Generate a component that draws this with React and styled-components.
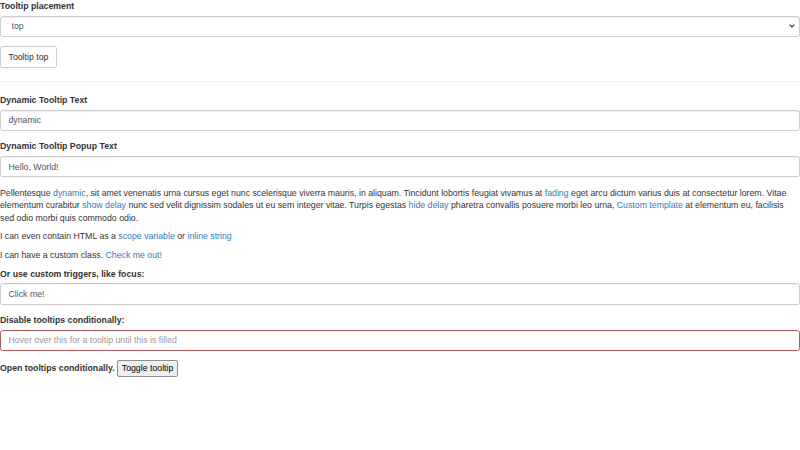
import React from "react";
import styled, { createGlobalStyle } from "styled-components";

const Global = createGlobalStyle`
  * { box-sizing: border-box; }
  html, body { margin: 0; padding: 0; background: #fff; }
  body {
    font-family: "Liberation Sans", Arial, Helvetica, sans-serif;
    font-size: 8.75px;
    line-height: 1.428571;
    color: #333;
  }
`;

const Page = styled.div`
  width: 800px;
`;

const FormGroup = styled.div`
  margin-bottom: 9.375px;
`;

const Label = styled.label`
  display: inline-block;
  max-width: 100%;
  margin-bottom: 3.125px;
  font-weight: bold;
`;

const fieldCss = `
  display: block;
  width: 100%;
  height: 21.25px;
  padding: 3.75px 7.5px;
  font-family: inherit;
  font-size: 8.75px;
  line-height: 1.428571;
  color: #555;
  background-color: #fff;
  border-radius: 2.5px;
  box-shadow: inset 0 0.625px 0.625px rgba(0, 0, 0, 0.075);
  outline: none;
  &::placeholder { color: #999; }
`;

const Input = styled.input`
  ${fieldCss}
  border: 1px solid ${(p) => (p.$error ? "#b25c5c" : "#ccc")};
`;

const chevron = encodeURIComponent(
  '<svg xmlns="http://www.w3.org/2000/svg" width="6" height="4" viewBox="0 0 6 4"><path d="M0.6 0.6 L3 3 L5.4 0.6" fill="none" stroke="#333" stroke-width="1.1"/></svg>'
);

const Select = styled.select`
  ${fieldCss}
  appearance: none;
  -webkit-appearance: none;
  padding: 0 16px 0 10.5px;
  border: 1px solid #ccc;
  background-image: url("data:image/svg+xml,${chevron}");
  background-repeat: no-repeat;
  background-position: right 4px center;
  background-size: 6px 4px;
`;

const Btn = styled.button`
  display: inline-block;
  padding: 3.75px 7.5px;
  font-family: inherit;
  font-size: 8.75px;
  line-height: 1.428571;
  color: #333;
  background: #fff;
  border: 1px solid #ccc;
  border-radius: 2.5px;
  cursor: pointer;
`;

const Rule = styled.hr`
  margin: 12.5px 0;
  border: 0;
  border-top: 1px solid #eee;
`;

const Para = styled.p`
  margin: 0 0 6.25px;
`;

const Link = styled.a`
  color: #337ab7;
  text-decoration: none;
  cursor: pointer;
`;

const PlainButton = styled.button`
  font-family: inherit;
  font-size: 8.75px;
  line-height: 1.428571;
  color: #000;
  background: #efefef;
  border: 1px solid #8f8f8f;
  border-radius: 2px;
  padding: 1px 3.75px;
`;

export default function App() {
  return (
    <Page>
      <Global />
      <FormGroup>
        <Label>Tooltip placement</Label>
        <Select defaultValue="top">
          <option value="top">top</option>
          <option value="bottom">bottom</option>
          <option value="left">left</option>
          <option value="right">right</option>
        </Select>
      </FormGroup>
      <Btn type="button">Tooltip top</Btn>
      <Rule />
      <FormGroup>
        <Label>Dynamic Tooltip Text</Label>
        <Input type="text" defaultValue="dynamic" />
      </FormGroup>
      <FormGroup>
        <Label>Dynamic Tooltip Popup Text</Label>
        <Input type="text" defaultValue="Hello, World!" />
      </FormGroup>
      <Para>
        Pellentesque <Link>dynamic</Link>, sit amet venenatis urna cursus eget
        nunc scelerisque viverra mauris, in aliquam. Tincidunt lobortis feugiat
        vivamus at <Link>fading</Link> eget arcu dictum varius duis at
        consectetur lorem. Vitae elementum curabitur <Link>show delay</Link>{" "}
        nunc sed velit dignissim sodales ut eu sem integer vitae. Turpis egestas{" "}
        <Link>hide delay</Link> pharetra convallis posuere morbi leo urna,{" "}
        <Link>Custom template</Link> at elementum eu, facilisis sed odio morbi
        quis commodo odio.
      </Para>
      <Para>
        I can even contain HTML as a <Link>scope variable</Link> or{" "}
        <Link>inline string</Link>
      </Para>
      <Para>
        I can have a custom class. <Link>Check me out!</Link>
      </Para>
      <FormGroup>
        <Label>Or use custom triggers, like focus:</Label>
        <Input type="text" defaultValue="Click me!" />
      </FormGroup>
      <FormGroup>
        <Label>Disable tooltips conditionally:</Label>
        <Input
          type="text"
          $error
          placeholder="Hover over this for a tooltip until this is filled"
        />
      </FormGroup>
      <FormGroup>
        <Label>Open tooltips conditionally.</Label>{" "}
        <PlainButton type="button">Toggle tooltip</PlainButton>
      </FormGroup>
    </Page>
  );
}
